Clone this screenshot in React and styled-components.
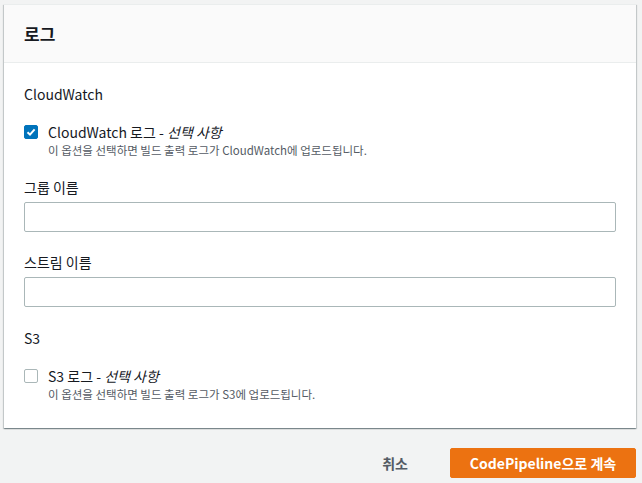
import React from "react";
import styled, { createGlobalStyle } from "styled-components";

const Global = createGlobalStyle`
  html, body { margin: 0; padding: 0; background: #f2f3f3; }
  body { font-family: "Noto Sans CJK KR", "Noto Sans", sans-serif; color: #16191f; }
  * { box-sizing: border-box; }
`;

const Page = styled.div`
  padding: 4px 6px 0 4px;
  display: flex;
  flex-direction: column;
`;

const Card = styled.section`
  background: #fff;
  box-shadow: 0 1px 1px 0 rgba(0, 28, 36, 0.3), 1px 1px 1px 0 rgba(0, 28, 36, 0.15),
    -1px 1px 1px 0 rgba(0, 28, 36, 0.15);
  border-top: 1px solid #eaeded;
`;

const Header = styled.header`
  background: #fafafa;
  border-bottom: 1px solid #eaeded;
  height: 58px;
  padding: 0 20px;
  display: flex;
  align-items: center;
`;

const Title = styled.h2`
  margin: 0;
  font-size: 17px;
  font-weight: 700;
  line-height: 22px;
`;

const Body = styled.div`
  padding: 20px 20px 26px;
  display: flex;
  flex-direction: column;
`;

const SectionTitle = styled.h3`
  margin: ${(p) => p.$top || 0}px 0 0;
  font-size: 14px;
  font-weight: 400;
  line-height: 22px;
`;

const CheckRow = styled.label`
  display: flex;
  gap: 10px;
  margin-top: 17px;
`;

const Box = styled.span`
  width: 14px;
  height: 14px;
  margin-top: 3px;
  border-radius: 2px;
  flex: none;
  display: flex;
  align-items: center;
  justify-content: center;
  background: ${(p) => (p.$checked ? "#0073bb" : "#fff")};
  border: 1px solid ${(p) => (p.$checked ? "#0073bb" : "#aab7b8")};
`;

const CheckText = styled.div`
  display: flex;
  flex-direction: column;
`;

const CheckLabel = styled.span`
  font-size: 14px;
  line-height: 20px;
  font-weight: 400;
  em { font-style: italic; }
`;

const Desc = styled.span`
  font-size: 11.5px;
  line-height: 16px;
  color: #545b64;
`;

const FieldLabel = styled.div`
  margin-top: ${(p) => p.$top}px;
  font-size: 14px;
  line-height: 20px;
`;

const Input = styled.input`
  margin-top: 5px;
  height: 30px;
  width: 100%;
  border: 1px solid #aab7b8;
  border-radius: 2px;
  background: #fff;
  font: inherit;
`;

const Actions = styled.div`
  margin-top: 20px;
  display: flex;
  justify-content: flex-end;
  align-items: center;
  gap: 22px;
`;

const LinkButton = styled.button`
  background: none;
  border: none;
  font: inherit;
  font-size: 14px;
  font-weight: 700;
  color: #545b64;
  padding: 4px 20px;
`;

const Primary = styled.button`
  width: 186px;
  height: 30px;
  background: #ec7211;
  border: 1px solid #ec7211;
  border-radius: 2px;
  color: #fff;
  font: inherit;
  font-size: 14px;
  font-weight: 700;
`;

const Check = () => (
  <svg width="10" height="10" viewBox="0 0 10 10">
    <path d="M1.5 5.2 L4 7.6 L8.6 2.4" fill="none" stroke="#fff" strokeWidth="2" />
  </svg>
);

export default function App() {
  return (
    <>
      <Global />
      <Page>
        <Card>
          <Header>
            <Title>로그</Title>
          </Header>
          <Body>
            <SectionTitle>CloudWatch</SectionTitle>
            <CheckRow>
              <Box $checked>
                <Check />
              </Box>
              <CheckText>
                <CheckLabel>
                  CloudWatch 로그 - <em>선택 사항</em>
                </CheckLabel>
                <Desc>이 옵션을 선택하면 빌드 출력 로그가 CloudWatch에 업로드됩니다.</Desc>
              </CheckText>
            </CheckRow>
            <FieldLabel $top={19}>그룹 이름</FieldLabel>
            <Input />
            <FieldLabel $top={20}>스트림 이름</FieldLabel>
            <Input />
            <SectionTitle $top={20}>S3</SectionTitle>
            <CheckRow>
              <Box />
              <CheckText>
                <CheckLabel>
                  S3 로그 - <em>선택 사항</em>
                </CheckLabel>
                <Desc>이 옵션을 선택하면 빌드 출력 로그가 S3에 업로드됩니다.</Desc>
              </CheckText>
            </CheckRow>
          </Body>
        </Card>
        <Actions>
          <LinkButton>취소</LinkButton>
          <Primary>CodePipeline으로 계속</Primary>
        </Actions>
      </Page>
    </>
  );
}
